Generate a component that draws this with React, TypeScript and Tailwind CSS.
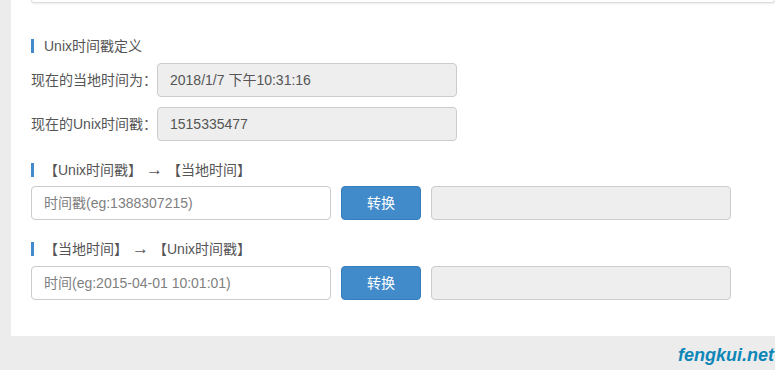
const font = "font-['Liberation_Sans','Noto_Sans_CJK_SC',sans-serif]"

function Title({ children }: { children: React.ReactNode }) {
  return (
    <div className="flex h-[15px] items-center">
      <span className="h-[14px] w-[3px] bg-[#428bca]" />
      <span className="ml-[10px] flex items-center text-[14px] leading-none text-[#555]">{children}</span>
    </div>
  )
}

function Arrow() {
  return <span className="mx-[4px] text-[17px] leading-none">→</span>
}

function ReadRow({ label, value }: { label: string; value: string }) {
  return (
    <div className="flex items-center">
      <span className="w-[126px] text-[14px] text-[#555]">{label}</span>
      <div className="flex h-[34px] w-[300px] items-center rounded border border-[#ccc] bg-[#eee] px-3 text-[14px] text-[#555]">
        {value}
      </div>
    </div>
  )
}

function ConvertRow({ placeholder }: { placeholder: string }) {
  return (
    <div className="flex items-center">
      <input
        placeholder={placeholder}
        className="h-[34px] w-[300px] rounded border border-[#ccc] bg-white px-3 text-[14px] text-[#555] placeholder:text-[#808080] outline-none"
      />
      <button className="ml-[10px] h-[34px] w-[80px] rounded border border-[#357ebd] bg-[#428bca] text-[14px] text-white">
        转换
      </button>
      <div className="ml-[10px] h-[34px] w-[300px] rounded border border-[#ccc] bg-[#eee]" />
    </div>
  )
}

export default function App() {
  return (
    <div className={`${font} h-[370px] w-[775px] overflow-hidden bg-[#ececec] pl-[11px]`}>
      <div className="flex h-[336px] flex-col bg-white pl-[20px]">
        <div className="h-[3px] rounded-b border border-t-0 border-[#ddd] shadow-[0_1px_2px_rgba(0,0,0,0.08)]" />
        <div className="mt-[35px]">
          <Title>Unix时间戳定义</Title>
        </div>
        <div className="mt-[10px] flex flex-col gap-[10px]">
          <ReadRow label="现在的当地时间为：" value="2018/1/7 下午10:31:16" />
          <ReadRow label="现在的Unix时间戳：" value="1515335477" />
        </div>
        <div className="mt-[21px]">
          <Title>
            【Unix时间戳】<Arrow />【当地时间】
          </Title>
        </div>
        <div className="mt-[9px]">
          <ConvertRow placeholder="时间戳(eg:1388307215)" />
        </div>
        <div className="mt-[21px]">
          <Title>
            【当地时间】<Arrow />【Unix时间戳】
          </Title>
        </div>
        <div className="mt-[10px]">
          <ConvertRow placeholder="时间(eg:2015-04-01 10:01:01)" />
        </div>
      </div>
      <div className="flex justify-end pr-[1px] pt-[7px]">
        <span className="text-[18px] font-bold italic leading-[24px] text-[#0e86b8]">fengkui.net</span>
      </div>
    </div>
  )
}
